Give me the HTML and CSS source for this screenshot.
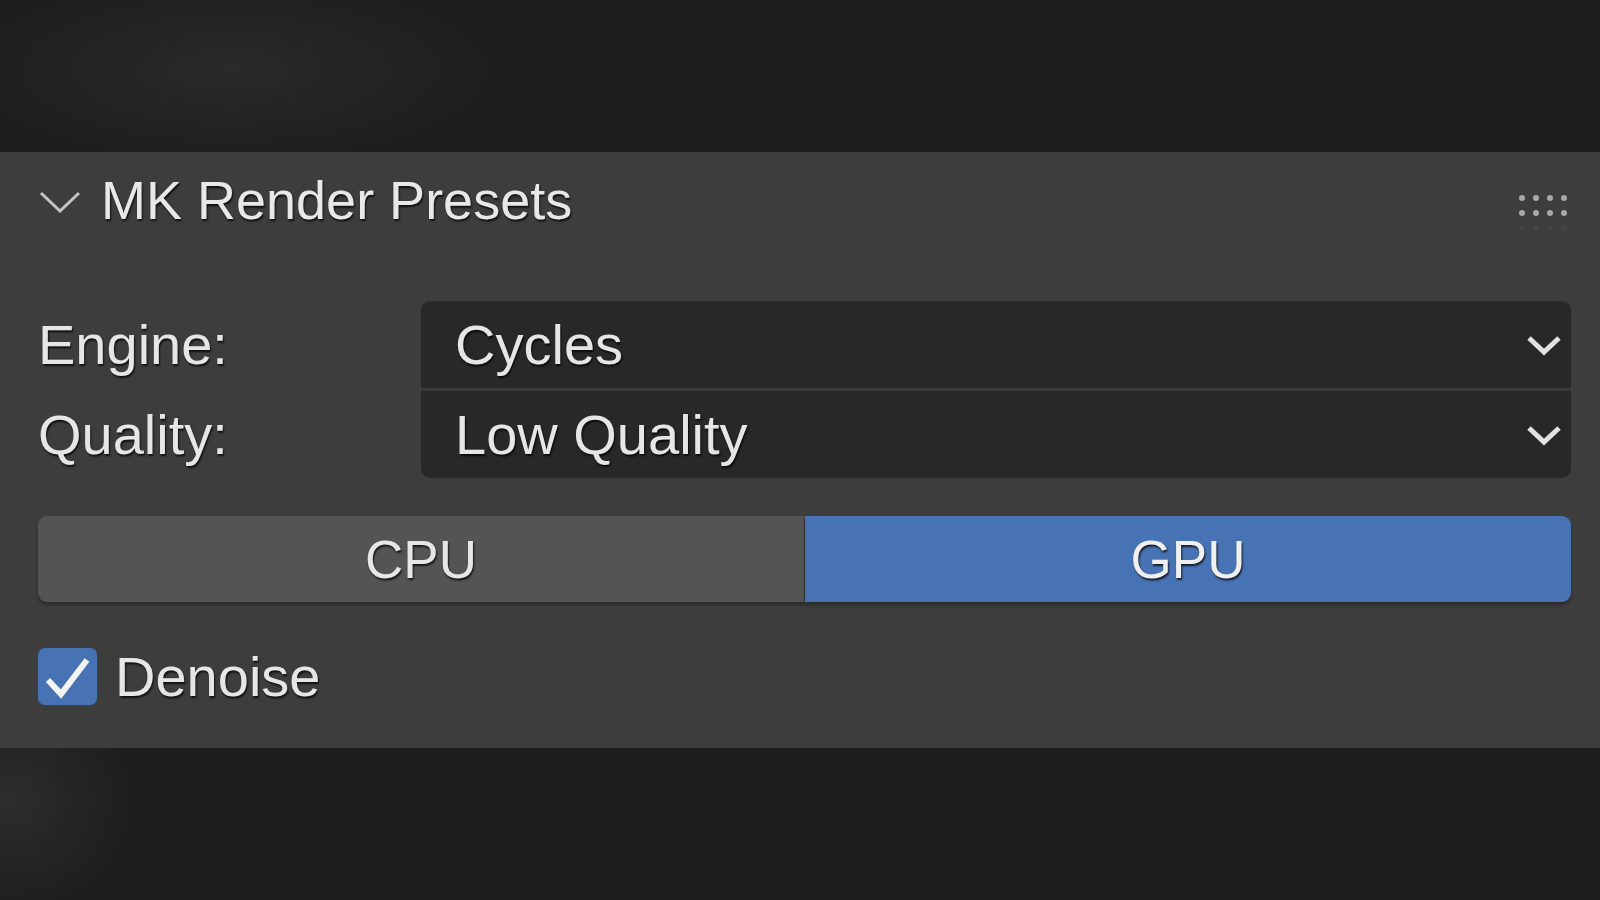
FILE: index.html
```html
<!DOCTYPE html>
<html lang="en">

<head>
    <meta charset="UTF-8">
    <meta name="viewport" content="width=device-width, initial-scale=1.0">
    <title>MK Render Presets</title>
    <link rel="stylesheet" href="styles.css">
</head>

<body>
    <div class="panel">
        <div class="panel-header">
            <svg class="collapse" width="42" height="22" viewBox="0 0 42 22">
                <polyline points="2,2 21,20 40,2" fill="none" stroke="#c4c4c4" stroke-width="3" />
            </svg>
            <p class="panel-title">MK Render Presets</p>
            <svg class="grip" width="50" height="40" viewBox="0 0 50 40">
                <g fill="#a8a8a8">
                    <circle cx="4" cy="5" r="3" />
                    <circle cx="18" cy="5" r="3" />
                    <circle cx="32" cy="5" r="3" />
                    <circle cx="46" cy="5" r="3" />
                    <circle cx="4" cy="20" r="3" />
                    <circle cx="18" cy="20" r="3" />
                    <circle cx="32" cy="20" r="3" />
                    <circle cx="46" cy="20" r="3" />
                </g>
                <g fill="#a8a8a8" opacity="0.07">
                    <circle cx="4" cy="35" r="3" />
                    <circle cx="18" cy="35" r="3" />
                    <circle cx="32" cy="35" r="3" />
                    <circle cx="46" cy="35" r="3" />
                </g>
            </svg>
        </div>

        <div class="props">
            <div class="labels">
                <p class="label">Engine:</p>
                <p class="label">Quality:</p>
            </div>
            <div class="menus">
                <div class="menu">
                    <p>Cycles</p>
                    <svg class="arrow" width="36" height="22" viewBox="0 0 36 22">
                        <polyline points="3,4 18,18 33,4" fill="none" stroke="#e2e2e2" stroke-width="5" />
                    </svg>
                </div>
                <div class="menu">
                    <p>Low Quality</p>
                    <svg class="arrow" width="36" height="22" viewBox="0 0 36 22">
                        <polyline points="3,4 18,18 33,4" fill="none" stroke="#e2e2e2" stroke-width="5" />
                    </svg>
                </div>
            </div>
        </div>

        <div class="device">
            <div id="cpu" class="device-btn">
                <p>CPU</p>
            </div>
            <div id="gpu" class="device-btn active">
                <p>GPU</p>
            </div>
        </div>

        <div class="check-row">
            <div class="checkbox">
                <svg width="59" height="57" viewBox="0 0 59 57">
                    <polyline points="10,32 23,46 49,12" fill="none" stroke="#f4f4f4" stroke-width="6" />
                </svg>
            </div>
            <p class="check-label">Denoise</p>
        </div>
    </div>
</body>

</html>
```

FILE: styles.css
```css
* {
    margin: 0px;
    padding: 0px;
    box-sizing: border-box;
}

body {
    height: 900px;
    overflow: hidden;
    font-family: "Liberation Sans", Arial, sans-serif;
    font-size: 56px;
    line-height: 1;
    color: #e6e6e6;
    background-color: #1e1e1e;
    background-image:
        radial-gradient(ellipse 260px 90px at 230px 70px, #2a2a2a, rgba(30, 30, 30, 0)),
        radial-gradient(ellipse 120px 110px at 10px 800px, #2d2d2d, rgba(30, 30, 30, 0));
}

p {
    text-shadow: 1px 2px 2px rgba(0, 0, 0, 0.75);
}

.panel {
    margin-top: 152px;
    height: 596px;
    background-color: #3d3d3d;
    padding: 0px 29px 0px 38px;
}

.panel-header {
    height: 96px;
    display: flex;
    align-items: center;
}

.collapse {
    margin-left: 1px;
    margin-top: 4px;
}

.panel-title {
    margin-left: 20px;
    font-size: 54px;
    color: #e8e8e8;
}

.grip {
    margin-left: auto;
    margin-right: 3px;
    margin-top: 26px;
}

.props {
    margin-top: 53px;
    display: flex;
}

.labels {
    width: 383px;
    display: flex;
    flex-direction: column;
    gap: 3px;
}

.label {
    height: 87px;
    display: flex;
    align-items: center;
}

.menus {
    flex: 1;
    display: flex;
    flex-direction: column;
    gap: 3px;
    background-color: #3a3a3a;
    border-radius: 9px;
}

.menu {
    height: 87px;
    display: flex;
    align-items: center;
    padding: 0px 9px 0px 34px;
    background-color: #282828;
}

.menu:first-child {
    border-radius: 9px 9px 0px 0px;
    border-top: 1px solid #2f2f2f;
}

.menu:last-child {
    border-radius: 0px 0px 9px 9px;
}

.arrow {
    margin-left: auto;
}

.device {
    margin-top: 38px;
    display: flex;
    gap: 1px;
}

.device-btn {
    flex: 1;
    height: 86px;
    display: flex;
    justify-content: center;
    align-items: center;
    font-size: 53px;
    background-color: #545454;
    box-shadow: 0px 3px 3px rgba(0, 0, 0, 0.3);
}

#cpu {
    border-radius: 9px 0px 0px 9px;
}

#gpu {
    border-radius: 0px 9px 9px 0px;
}

.device-btn.active {
    background-color: #4772b3;
    color: #f0f0f0;
}

.check-row {
    margin-top: 46px;
    display: flex;
    align-items: center;
}

.checkbox {
    width: 59px;
    height: 57px;
    border-radius: 7px;
    background-color: #4772b3;
}

.checkbox svg {
    display: block;
}

.check-label {
    margin-left: 18px;
}
```
